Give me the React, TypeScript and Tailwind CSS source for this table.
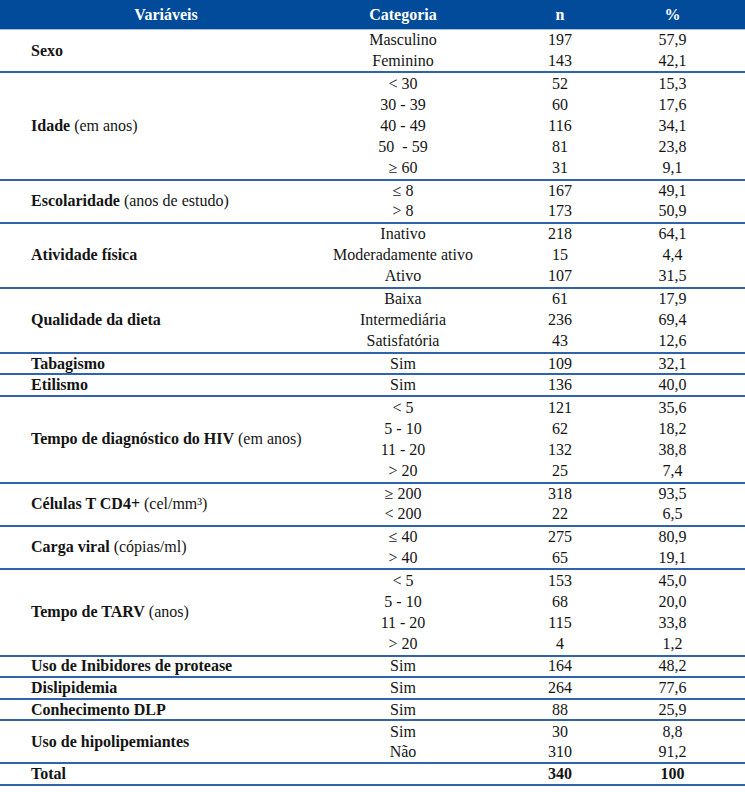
import React from "react";

interface Row {
  cat: string;
  n: string;
  pct: string;
}

interface Group {
  label: string;
  extra?: string;
  rows: Row[];
  bold?: boolean;
}

const groups: Group[] = [
  {
    label: "Sexo",
    rows: [
      { cat: "Masculino", n: "197", pct: "57,9" },
      { cat: "Feminino", n: "143", pct: "42,1" },
    ],
  },
  {
    label: "Idade",
    extra: "(em anos)",
    rows: [
      { cat: "< 30", n: "52", pct: "15,3" },
      { cat: "30 - 39", n: "60", pct: "17,6" },
      { cat: "40 - 49", n: "116", pct: "34,1" },
      { cat: "50  - 59", n: "81", pct: "23,8" },
      { cat: "≥ 60", n: "31", pct: "9,1" },
    ],
  },
  {
    label: "Escolaridade",
    extra: "(anos de estudo)",
    rows: [
      { cat: "≤ 8", n: "167", pct: "49,1" },
      { cat: "> 8", n: "173", pct: "50,9" },
    ],
  },
  {
    label: "Atividade física",
    rows: [
      { cat: "Inativo", n: "218", pct: "64,1" },
      { cat: "Moderadamente ativo", n: "15", pct: "4,4" },
      { cat: "Ativo", n: "107", pct: "31,5" },
    ],
  },
  {
    label: "Qualidade da dieta",
    rows: [
      { cat: "Baixa", n: "61", pct: "17,9" },
      { cat: "Intermediária", n: "236", pct: "69,4" },
      { cat: "Satisfatória", n: "43", pct: "12,6" },
    ],
  },
  { label: "Tabagismo", rows: [{ cat: "Sim", n: "109", pct: "32,1" }] },
  { label: "Etilismo", rows: [{ cat: "Sim", n: "136", pct: "40,0" }] },
  {
    label: "Tempo de diagnóstico do HIV",
    extra: "(em anos)",
    rows: [
      { cat: "< 5", n: "121", pct: "35,6" },
      { cat: "5 - 10", n: "62", pct: "18,2" },
      { cat: "11 - 20", n: "132", pct: "38,8" },
      { cat: "> 20", n: "25", pct: "7,4" },
    ],
  },
  {
    label: "Células T CD4+",
    extra: "(cel/mm³)",
    rows: [
      { cat: "≥ 200", n: "318", pct: "93,5" },
      { cat: "< 200", n: "22", pct: "6,5" },
    ],
  },
  {
    label: "Carga viral",
    extra: "(cópias/ml)",
    rows: [
      { cat: "≤ 40", n: "275", pct: "80,9" },
      { cat: "> 40", n: "65", pct: "19,1" },
    ],
  },
  {
    label: "Tempo de TARV",
    extra: "(anos)",
    rows: [
      { cat: "< 5", n: "153", pct: "45,0" },
      { cat: "5 - 10", n: "68", pct: "20,0" },
      { cat: "11 - 20", n: "115", pct: "33,8" },
      { cat: "> 20", n: "4", pct: "1,2" },
    ],
  },
  {
    label: "Uso de Inibidores de protease",
    rows: [{ cat: "Sim", n: "164", pct: "48,2" }],
  },
  { label: "Dislipidemia", rows: [{ cat: "Sim", n: "264", pct: "77,6" }] },
  { label: "Conhecimento DLP", rows: [{ cat: "Sim", n: "88", pct: "25,9" }] },
  {
    label: "Uso de hipolipemiantes",
    rows: [
      { cat: "Sim", n: "30", pct: "8,8" },
      { cat: "Não", n: "310", pct: "91,2" },
    ],
  },
  { label: "Total", bold: true, rows: [{ cat: "", n: "340", pct: "100" }] },
];

// group heights by row count
const heights: Record<number, string> = {
  1: "h-[21.6px]",
  2: "h-[43.2px]",
  3: "h-[65px]",
  4: "h-[86.6px]",
  5: "h-[107.4px]",
};

export default function App() {
  return (
    <div className="w-[745px] bg-white text-[#141414] text-[16px] leading-none font-['Liberation_Serif']">
      {/* Header */}
      <div className="grid grid-cols-[332px_142px_172px_1fr] h-[30px] items-center bg-[#024b9b] border-b border-[#a7c2e6] font-bold text-white">
        <div className="text-center">Variáveis</div>
        <div className="text-center">Categoria</div>
        <div className="text-center">n</div>
        <div className="text-center pr-[46px]">%</div>
      </div>

      {groups.map((g) => (
        <div
          key={g.label}
          className={`grid grid-cols-[332px_1fr] border-b-2 border-[#2f63ac] ${heights[g.rows.length]}`}
        >
          <div className="flex items-center pl-[31px]">
            <span className="font-bold">{g.label}</span>
            {g.extra && <span className="ml-[4px] font-['Tinos']">{g.extra}</span>}
          </div>
          <div className="flex flex-col">
            {g.rows.map((r, i) => (
              <div
                key={i}
                className={`flex-1 grid grid-cols-[142px_172px_1fr] items-center ${g.bold ? "font-bold" : "font-['Tinos']"}`}
              >
                <div className="text-center whitespace-pre">{r.cat}</div>
                <div className="text-center">{r.n}</div>
                <div className="text-center pr-[46px]">{r.pct}</div>
              </div>
            ))}
          </div>
        </div>
      ))}
    </div>
  );
}
